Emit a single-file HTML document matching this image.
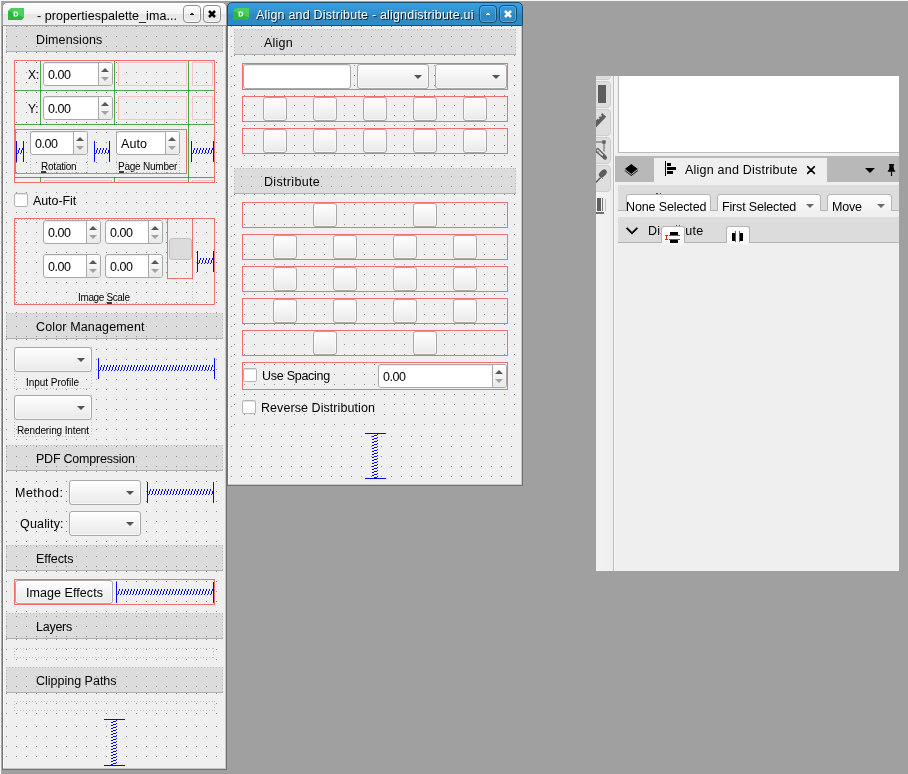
<!DOCTYPE html><html><head><meta charset="utf-8"><title>Qt Designer</title><style>
html,body{margin:0;padding:0}
body{width:908px;height:774px;position:relative;overflow:hidden;background:#a0a0a0;font-family:"Liberation Sans", sans-serif;}
div,svg{position:absolute;box-sizing:content-box}
.a{position:absolute}
.t{position:absolute;white-space:nowrap;font-family:"Liberation Sans", sans-serif;will-change:transform}

</style></head><body>
<div class="a" style="left:0px;top:0px;width:908px;height:1px;background:#f6f6f6"></div>
<div class="a" style="left:0px;top:0px;width:1px;height:774px;background:#f6f6f6"></div>
<div class="a" style="left:1px;top:1px;width:1px;height:773px;background:#aeaeae"></div>
<div class="a" style="left:2px;top:6px;width:225px;height:764px;background:#efefef"></div>
<div class="a" style="left:2px;top:6px;width:223px;height:763px;border:1px solid #727272;border-top:none"></div>
<div class="a" style="left:3px;top:6px;width:1px;height:763px;background:#ffffff"></div>
<div class="a" style="left:3px;top:768px;width:222px;height:1px;background:#c7c7c7"></div>
<div class="a" style="left:225px;top:6px;width:1px;height:763px;background:#c7c7c7"></div>
<div class="a" style="left:2px;top:2px;width:223px;height:22px;border:1px solid #9b9b9b;border-radius:5px 5px 0 0;background:linear-gradient(#ffffff 0%,#f4f4f4 50%,#e6e6e6 51%,#efefef 100%)"></div>
<div class="a" style="left:227px;top:6px;width:296px;height:480px;background:#efefef"></div>
<div class="a" style="left:227px;top:6px;width:294px;height:479px;border:1px solid #727272;border-top:none"></div>
<div class="a" style="left:228px;top:6px;width:1px;height:479px;background:#ffffff"></div>
<div class="a" style="left:228px;top:484px;width:293px;height:1px;background:#c7c7c7"></div>
<div class="a" style="left:521px;top:6px;width:1px;height:479px;background:#c7c7c7"></div>
<div class="a" style="left:227px;top:2px;width:294px;height:22px;border:1px solid #1b4e6e;border-radius:5px 5px 0 0;background:linear-gradient(#37a0e2 0%,#318fca 50%,#2e87be 51%,#308cc6 100%)"></div>
<svg class="a" style="left:8px;top:8px" width="16" height="12" viewBox="0 0 16 12"><path d="M3 0H16V9.5L13.5 12H0V3Z" fill="#41cd52"/><path d="M0 3L16 9.5L13.5 12H0Z" fill="#2cb640"/><path d="M16 0V9.5L3 0Z" fill="#52d463" opacity=".6"/><path d="M5.6 3.4H8.2Q10.2 3.4 10.2 6Q10.2 8.6 8.2 8.6H5.6Z M6.9 4.5V7.5H8Q8.9 7.5 8.9 6Q8.9 4.5 8 4.5Z" fill="#fff" fill-rule="evenodd"/></svg>
<div class="t" style="left:36.50px;top:9px;font-size:12.5px;line-height:14px;color:#000;letter-spacing:0.068px;">- propertiespalette_ima...</div>
<div class="a" style="left:183px;top:5px;width:16px;height:16px;border-radius:4px;border:1px solid #8e8e8e;box-shadow:inset 0 0 0 1px rgba(255,255,255,0.5)"></div>
<div class="a" style="left:203px;top:5px;width:16px;height:16px;border-radius:4px;border:1px solid #8e8e8e;box-shadow:inset 0 0 0 1px rgba(255,255,255,0.5)"></div>
<svg class="a" style="left:190px;top:13px" width="4" height="2"><path d="M0 2V1.2Q0 1 .4 .9L1.4 .2Q2 -.1 2.6 .2L3.6 .9Q4 1 4 1.2V2Z" fill="#000"/></svg>
<svg class="a" style="left:208px;top:10px" width="8" height="8"><path d="M1 1L7 7M7 1L1 7" stroke="#000" stroke-width="2.5" stroke-linecap="butt"/></svg>
<svg class="a" style="left:6px;top:26px" width="217" height="740" shape-rendering="crispEdges"><defs><pattern id="p1" x="0" y="0" width="10" height="10" patternUnits="userSpaceOnUse"><rect width="1" height="1" fill="#8c8c8c"/></pattern></defs><rect width="217" height="740" fill="url(#p1)"/></svg>
<div class="a" style="left:6px;top:52px;width:217px;height:261px;background:#efefef"></div>
<svg class="a" style="left:6px;top:52px" width="217" height="261" shape-rendering="crispEdges"><defs><pattern id="p2" x="0" y="0" width="10" height="10" patternUnits="userSpaceOnUse"><rect width="1" height="1" fill="#8c8c8c"/></pattern></defs><rect width="217" height="261" fill="url(#p2)"/></svg>
<div class="a" style="left:6px;top:339px;width:217px;height:106px;background:#efefef"></div>
<svg class="a" style="left:6px;top:339px" width="217" height="106" shape-rendering="crispEdges"><defs><pattern id="p3" x="0" y="0" width="10" height="10" patternUnits="userSpaceOnUse"><rect width="1" height="1" fill="#8c8c8c"/></pattern></defs><rect width="217" height="106" fill="url(#p3)"/></svg>
<div class="a" style="left:6px;top:471px;width:217px;height:74px;background:#efefef"></div>
<svg class="a" style="left:6px;top:471px" width="217" height="74" shape-rendering="crispEdges"><defs><pattern id="p4" x="0" y="0" width="10" height="10" patternUnits="userSpaceOnUse"><rect width="1" height="1" fill="#8c8c8c"/></pattern></defs><rect width="217" height="74" fill="url(#p4)"/></svg>
<div class="a" style="left:6px;top:571px;width:217px;height:42px;background:#efefef"></div>
<svg class="a" style="left:6px;top:571px" width="217" height="42" shape-rendering="crispEdges"><defs><pattern id="p5" x="0" y="0" width="10" height="10" patternUnits="userSpaceOnUse"><rect width="1" height="1" fill="#8c8c8c"/></pattern></defs><rect width="217" height="42" fill="url(#p5)"/></svg>
<div class="a" style="left:6px;top:639px;width:217px;height:28px;background:#efefef"></div>
<svg class="a" style="left:6px;top:639px" width="217" height="28" shape-rendering="crispEdges"><defs><pattern id="p6" x="0" y="0" width="10" height="10" patternUnits="userSpaceOnUse"><rect width="1" height="1" fill="#8c8c8c"/></pattern></defs><rect width="217" height="28" fill="url(#p6)"/></svg>
<div class="a" style="left:6px;top:693px;width:217px;height:26px;background:#efefef"></div>
<svg class="a" style="left:6px;top:693px" width="217" height="26" shape-rendering="crispEdges"><defs><pattern id="p7" x="0" y="0" width="10" height="10" patternUnits="userSpaceOnUse"><rect width="1" height="1" fill="#8c8c8c"/></pattern></defs><rect width="217" height="26" fill="url(#p7)"/></svg>
<div class="a" style="left:6px;top:26px;width:217px;height:25px;background:#dcdcdc"></div>
<svg class="a" style="left:6px;top:26px" width="217" height="25" shape-rendering="crispEdges"><defs><pattern id="p8" x="0" y="0" width="10" height="10" patternUnits="userSpaceOnUse"><rect width="1" height="1" fill="#8e8e8e"/></pattern></defs><rect width="217" height="25" fill="url(#p8)"/></svg>
<div class="a" style="left:6px;top:51px;width:217px;height:1px;background:#b0b0b0"></div>
<div class="a" style="left:6px;top:26px;width:217px;height:1px;background:repeating-linear-gradient(to right,#b9b9b9 0 1px,transparent 1px 3px);background-position:0px 0"></div>
<div class="a" style="left:6px;top:26px;width:1px;height:25px;background:repeating-linear-gradient(to bottom,#b9b9b9 0 1px,transparent 1px 3px);background-position:0 0px"></div>
<div class="a" style="left:222px;top:26px;width:1px;height:25px;background:repeating-linear-gradient(to bottom,#b9b9b9 0 1px,transparent 1px 3px);background-position:0 0px"></div>
<div class="t" style="left:36.10px;top:33px;font-size:12.5px;line-height:14px;color:#000;letter-spacing:0.116px;">Dimensions</div>
<div class="a" style="left:6px;top:313px;width:217px;height:25px;background:#dcdcdc"></div>
<svg class="a" style="left:6px;top:313px" width="217" height="25" shape-rendering="crispEdges"><defs><pattern id="p9" x="0" y="3" width="10" height="10" patternUnits="userSpaceOnUse"><rect width="1" height="1" fill="#8e8e8e"/></pattern></defs><rect width="217" height="25" fill="url(#p9)"/></svg>
<div class="a" style="left:6px;top:338px;width:217px;height:1px;background:#b0b0b0"></div>
<div class="a" style="left:6px;top:313px;width:217px;height:1px;background:repeating-linear-gradient(to right,#b9b9b9 0 1px,transparent 1px 3px);background-position:0px 0"></div>
<div class="a" style="left:6px;top:313px;width:1px;height:25px;background:repeating-linear-gradient(to bottom,#b9b9b9 0 1px,transparent 1px 3px);background-position:0 0px"></div>
<div class="a" style="left:222px;top:313px;width:1px;height:25px;background:repeating-linear-gradient(to bottom,#b9b9b9 0 1px,transparent 1px 3px);background-position:0 0px"></div>
<div class="t" style="left:36.10px;top:320px;font-size:12.5px;line-height:14px;color:#000;letter-spacing:0.145px;">Color Management</div>
<div class="a" style="left:6px;top:445px;width:217px;height:25px;background:#dcdcdc"></div>
<svg class="a" style="left:6px;top:445px" width="217" height="25" shape-rendering="crispEdges"><defs><pattern id="p10" x="0" y="1" width="10" height="10" patternUnits="userSpaceOnUse"><rect width="1" height="1" fill="#8e8e8e"/></pattern></defs><rect width="217" height="25" fill="url(#p10)"/></svg>
<div class="a" style="left:6px;top:470px;width:217px;height:1px;background:#b0b0b0"></div>
<div class="a" style="left:6px;top:445px;width:217px;height:1px;background:repeating-linear-gradient(to right,#b9b9b9 0 1px,transparent 1px 3px);background-position:0px 0"></div>
<div class="a" style="left:6px;top:445px;width:1px;height:25px;background:repeating-linear-gradient(to bottom,#b9b9b9 0 1px,transparent 1px 3px);background-position:0 0px"></div>
<div class="a" style="left:222px;top:445px;width:1px;height:25px;background:repeating-linear-gradient(to bottom,#b9b9b9 0 1px,transparent 1px 3px);background-position:0 0px"></div>
<div class="t" style="left:36.10px;top:452px;font-size:12.5px;line-height:14px;color:#000;letter-spacing:-0.226px;">PDF Compression</div>
<div class="a" style="left:6px;top:545px;width:217px;height:25px;background:#dcdcdc"></div>
<svg class="a" style="left:6px;top:545px" width="217" height="25" shape-rendering="crispEdges"><defs><pattern id="p11" x="0" y="1" width="10" height="10" patternUnits="userSpaceOnUse"><rect width="1" height="1" fill="#8e8e8e"/></pattern></defs><rect width="217" height="25" fill="url(#p11)"/></svg>
<div class="a" style="left:6px;top:570px;width:217px;height:1px;background:#b0b0b0"></div>
<div class="a" style="left:6px;top:545px;width:217px;height:1px;background:repeating-linear-gradient(to right,#b9b9b9 0 1px,transparent 1px 3px);background-position:0px 0"></div>
<div class="a" style="left:6px;top:545px;width:1px;height:25px;background:repeating-linear-gradient(to bottom,#b9b9b9 0 1px,transparent 1px 3px);background-position:0 0px"></div>
<div class="a" style="left:222px;top:545px;width:1px;height:25px;background:repeating-linear-gradient(to bottom,#b9b9b9 0 1px,transparent 1px 3px);background-position:0 0px"></div>
<div class="t" style="left:36.10px;top:552px;font-size:12.5px;line-height:14px;color:#000;letter-spacing:-0.089px;">Effects</div>
<div class="a" style="left:6px;top:613px;width:217px;height:25px;background:#dcdcdc"></div>
<svg class="a" style="left:6px;top:613px" width="217" height="25" shape-rendering="crispEdges"><defs><pattern id="p12" x="0" y="3" width="10" height="10" patternUnits="userSpaceOnUse"><rect width="1" height="1" fill="#8e8e8e"/></pattern></defs><rect width="217" height="25" fill="url(#p12)"/></svg>
<div class="a" style="left:6px;top:638px;width:217px;height:1px;background:#b0b0b0"></div>
<div class="a" style="left:6px;top:613px;width:217px;height:1px;background:repeating-linear-gradient(to right,#b9b9b9 0 1px,transparent 1px 3px);background-position:0px 0"></div>
<div class="a" style="left:6px;top:613px;width:1px;height:25px;background:repeating-linear-gradient(to bottom,#b9b9b9 0 1px,transparent 1px 3px);background-position:0 0px"></div>
<div class="a" style="left:222px;top:613px;width:1px;height:25px;background:repeating-linear-gradient(to bottom,#b9b9b9 0 1px,transparent 1px 3px);background-position:0 0px"></div>
<div class="t" style="left:36.10px;top:620px;font-size:12.5px;line-height:14px;color:#000;letter-spacing:-0.254px;">Layers</div>
<div class="a" style="left:6px;top:667px;width:217px;height:25px;background:#dcdcdc"></div>
<svg class="a" style="left:6px;top:667px" width="217" height="25" shape-rendering="crispEdges"><defs><pattern id="p13" x="0" y="9" width="10" height="10" patternUnits="userSpaceOnUse"><rect width="1" height="1" fill="#8e8e8e"/></pattern></defs><rect width="217" height="25" fill="url(#p13)"/></svg>
<div class="a" style="left:6px;top:692px;width:217px;height:1px;background:#b0b0b0"></div>
<div class="a" style="left:6px;top:667px;width:217px;height:1px;background:repeating-linear-gradient(to right,#b9b9b9 0 1px,transparent 1px 3px);background-position:0px 0"></div>
<div class="a" style="left:6px;top:667px;width:1px;height:25px;background:repeating-linear-gradient(to bottom,#b9b9b9 0 1px,transparent 1px 3px);background-position:0 0px"></div>
<div class="a" style="left:222px;top:667px;width:1px;height:25px;background:repeating-linear-gradient(to bottom,#b9b9b9 0 1px,transparent 1px 3px);background-position:0 0px"></div>
<div class="t" style="left:36.20px;top:674px;font-size:12.5px;line-height:14px;color:#000;letter-spacing:-0.004px;">Clipping Paths</div>
<div class="a" style="left:14px;top:60px;width:199px;height:121px;border:1px solid #f07070"></div>
<div class="a" style="left:40px;top:61px;width:1px;height:64px;background:#4ea64e"></div>
<div class="a" style="left:40px;top:177px;width:1px;height:5px;background:#4ea64e"></div>
<div class="a" style="left:114px;top:61px;width:1px;height:64px;background:#4ea64e"></div>
<div class="a" style="left:114px;top:177px;width:1px;height:5px;background:#4ea64e"></div>
<div class="a" style="left:188px;top:61px;width:1px;height:121px;background:#4ea64e"></div>
<div class="a" style="left:15px;top:90px;width:199px;height:1px;background:#4ea64e"></div>
<div class="a" style="left:40px;top:90px;width:1px;height:1px;background:#1f861f"></div>
<div class="a" style="left:114px;top:90px;width:1px;height:1px;background:#1f861f"></div>
<div class="a" style="left:188px;top:90px;width:1px;height:1px;background:#1f861f"></div>
<div class="a" style="left:15px;top:124px;width:199px;height:1px;background:#4ea64e"></div>
<div class="a" style="left:40px;top:124px;width:1px;height:1px;background:#1f861f"></div>
<div class="a" style="left:114px;top:124px;width:1px;height:1px;background:#1f861f"></div>
<div class="a" style="left:188px;top:124px;width:1px;height:1px;background:#1f861f"></div>
<div class="a" style="left:15px;top:177px;width:199px;height:1px;background:#4ea64e"></div>
<div class="a" style="left:40px;top:177px;width:1px;height:1px;background:#1f861f"></div>
<div class="a" style="left:114px;top:177px;width:1px;height:1px;background:#1f861f"></div>
<div class="a" style="left:188px;top:177px;width:1px;height:1px;background:#1f861f"></div>
<div class="a" style="left:118px;top:62px;width:67px;height:22px;border:1px solid #f6c4c4"></div>
<div class="a" style="left:192px;top:62px;width:19px;height:22px;border:1px solid #f6c4c4"></div>
<div class="a" style="left:118px;top:96px;width:67px;height:22px;border:1px solid #f6c4c4"></div>
<div class="a" style="left:192px;top:96px;width:19px;height:22px;border:1px solid #f6c4c4"></div>
<div class="a" style="left:44px;top:180px;width:68px;height:1px;background:#f6c4c4"></div>
<div class="a" style="left:44px;top:180px;width:1px;height:2px;background:#f6c4c4"></div>
<div class="a" style="left:111px;top:180px;width:1px;height:2px;background:#f6c4c4"></div>
<div class="a" style="left:118px;top:180px;width:69px;height:1px;background:#f6c4c4"></div>
<div class="a" style="left:118px;top:180px;width:1px;height:2px;background:#f6c4c4"></div>
<div class="a" style="left:186px;top:180px;width:1px;height:2px;background:#f6c4c4"></div>
<div class="a" style="left:192px;top:180px;width:21px;height:1px;background:#f6c4c4"></div>
<div class="a" style="left:192px;top:180px;width:1px;height:2px;background:#f6c4c4"></div>
<div class="a" style="left:212px;top:180px;width:1px;height:2px;background:#f6c4c4"></div>
<div class="t" style="left:27.70px;top:68px;font-size:12px;line-height:14px;color:#000;letter-spacing:0.000px;">X:</div>
<div class="t" style="left:28.36px;top:102px;font-size:12px;line-height:14px;color:#000;letter-spacing:0.000px;">Y:</div>
<div class="a" style="left:43px;top:62px;width:68px;height:22px;border:1px solid #a8a8a8;border-radius:3px;background:#fff;overflow:hidden;box-shadow:inset 0 1px 0 #ececec"><div class="a" style="left:54px;top:0;width:15px;height:22px;background:linear-gradient(#fefefe,#e9e9e9);border-left:1px solid #a9a9a9"></div></div>
<svg class="a" style="left:101.0px;top:68.0px" width="8" height="4"><path d="M0 4H8L4.0 0Z" fill="#585858"/></svg>
<svg class="a" style="left:101.0px;top:77.0px" width="8" height="4"><path d="M0 0H8L4.0 4Z" fill="#a2a2a2"/></svg>
<div class="t" style="left:48.30px;top:68px;font-size:12.5px;line-height:14px;color:#000;letter-spacing:-0.426px;">0.00</div>
<div class="a" style="left:43px;top:96px;width:68px;height:22px;border:1px solid #a8a8a8;border-radius:3px;background:#fff;overflow:hidden;box-shadow:inset 0 1px 0 #ececec"><div class="a" style="left:54px;top:0;width:15px;height:22px;background:linear-gradient(#fefefe,#e9e9e9);border-left:1px solid #a9a9a9"></div></div>
<svg class="a" style="left:101.0px;top:102.0px" width="8" height="4"><path d="M0 4H8L4.0 0Z" fill="#585858"/></svg>
<svg class="a" style="left:101.0px;top:111.0px" width="8" height="4"><path d="M0 0H8L4.0 4Z" fill="#a2a2a2"/></svg>
<div class="t" style="left:48.30px;top:102px;font-size:12.5px;line-height:14px;color:#000;letter-spacing:-0.426px;">0.00</div>
<div class="a" style="left:15px;top:129px;width:172px;height:45px;background:#efefef"></div>
<svg class="a" style="left:15px;top:129px" width="172" height="45" shape-rendering="crispEdges"><defs><pattern id="p14" x="1" y="3" width="10" height="10" patternUnits="userSpaceOnUse"><rect width="1" height="1" fill="#8c8c8c"/></pattern></defs><rect width="172" height="45" fill="url(#p14)"/></svg>
<div class="a" style="left:15px;top:129px;width:170px;height:43px;border:1px solid #f07070"></div>
<div class="a" style="left:30px;top:131px;width:58px;height:1px;background:repeating-linear-gradient(to right,#c0c0c0 0 1px,transparent 1px 3px);background-position:0px 0"></div>
<div class="a" style="left:30px;top:172px;width:58px;height:1px;background:repeating-linear-gradient(to right,#c0c0c0 0 1px,transparent 1px 3px);background-position:0px 0"></div>
<div class="a" style="left:30px;top:131px;width:1px;height:42px;background:repeating-linear-gradient(to bottom,#c0c0c0 0 1px,transparent 1px 3px);background-position:0 0px"></div>
<div class="a" style="left:87px;top:131px;width:1px;height:42px;background:repeating-linear-gradient(to bottom,#c0c0c0 0 1px,transparent 1px 3px);background-position:0 0px"></div>
<div class="a" style="left:116px;top:131px;width:64px;height:1px;background:repeating-linear-gradient(to right,#c0c0c0 0 1px,transparent 1px 3px);background-position:0px 0"></div>
<div class="a" style="left:116px;top:172px;width:64px;height:1px;background:repeating-linear-gradient(to right,#c0c0c0 0 1px,transparent 1px 3px);background-position:0px 0"></div>
<div class="a" style="left:116px;top:131px;width:1px;height:42px;background:repeating-linear-gradient(to bottom,#c0c0c0 0 1px,transparent 1px 3px);background-position:0 0px"></div>
<div class="a" style="left:179px;top:131px;width:1px;height:42px;background:repeating-linear-gradient(to bottom,#c0c0c0 0 1px,transparent 1px 3px);background-position:0 0px"></div>
<div class="a" style="left:30px;top:131px;width:56px;height:22px;border:1px solid #a8a8a8;border-radius:3px;background:#fff;overflow:hidden;box-shadow:inset 0 1px 0 #ececec"><div class="a" style="left:42px;top:0;width:15px;height:22px;background:linear-gradient(#fefefe,#e9e9e9);border-left:1px solid #a9a9a9"></div></div>
<svg class="a" style="left:76.0px;top:137.0px" width="8" height="4"><path d="M0 4H8L4.0 0Z" fill="#585858"/></svg>
<svg class="a" style="left:76.0px;top:146.0px" width="8" height="4"><path d="M0 0H8L4.0 4Z" fill="#a2a2a2"/></svg>
<div class="t" style="left:35.30px;top:137px;font-size:12.5px;line-height:14px;color:#000;letter-spacing:-0.426px;">0.00</div>
<div class="a" style="left:116px;top:131px;width:62px;height:22px;border:1px solid #a8a8a8;border-radius:3px;background:#fff;overflow:hidden;box-shadow:inset 0 1px 0 #ececec"><div class="a" style="left:48px;top:0;width:15px;height:22px;background:linear-gradient(#fefefe,#e9e9e9);border-left:1px solid #a9a9a9"></div></div>
<svg class="a" style="left:168.0px;top:137.0px" width="8" height="4"><path d="M0 4H8L4.0 0Z" fill="#585858"/></svg>
<svg class="a" style="left:168.0px;top:146.0px" width="8" height="4"><path d="M0 0H8L4.0 4Z" fill="#a2a2a2"/></svg>
<div class="t" style="left:121.30px;top:137px;font-size:12.5px;line-height:14px;color:#000;letter-spacing:0.046px;">Auto</div>
<div class="t" style="left:40.80px;top:161px;font-size:10px;line-height:11px;color:#000;letter-spacing:-0.226px;">Rotation</div>
<div class="t" style="left:118.40px;top:161px;font-size:10px;line-height:11px;color:#000;letter-spacing:-0.227px;">Page Number</div>
<div class="a" style="left:41px;top:171px;width:5px;height:2px;background:#3a3a3a"></div>
<div class="a" style="left:119px;top:171px;width:5px;height:2px;background:#3a3a3a"></div>
<svg class="a" style="left:16px;top:141px" width="8" height="21" shape-rendering="crispEdges"><path d="M0.5 7.5L1.5 13.5M3.5 7.5L4.5 13.5M6.5 7.5L7.5 13.5M9.5 7.5L10.5 13.5" stroke="#fff" stroke-width="1" fill="none"/><path d="M1.5 13.5L3.5 7.5M4.5 13.5L6.5 7.5M7.5 13.5L9.5 7.5M10.5 13.5L12.5 7.5" stroke="#0000ff" stroke-width="1" fill="none"/><rect x="0" y="0" width="1" height="21" fill="#0000ff"/><rect x="7" y="0" width="1" height="21" fill="#0000ff"/></svg>
<svg class="a" style="left:94px;top:141px" width="16" height="21" shape-rendering="crispEdges"><path d="M0.5 7.5L1.5 13.5M3.5 7.5L4.5 13.5M6.5 7.5L7.5 13.5M9.5 7.5L10.5 13.5M12.5 7.5L13.5 13.5M15.5 7.5L16.5 13.5M18.5 7.5L19.5 13.5" stroke="#fff" stroke-width="1" fill="none"/><path d="M1.5 13.5L3.5 7.5M4.5 13.5L6.5 7.5M7.5 13.5L9.5 7.5M10.5 13.5L12.5 7.5M13.5 13.5L15.5 7.5M16.5 13.5L18.5 7.5M19.5 13.5L21.5 7.5" stroke="#0000ff" stroke-width="1" fill="none"/><rect x="0" y="0" width="1" height="21" fill="#0000ff"/><rect x="15" y="0" width="1" height="21" fill="#0000ff"/></svg>
<svg class="a" style="left:191px;top:141px" width="23" height="21" shape-rendering="crispEdges"><path d="M0.5 7.5L1.5 13.5M3.5 7.5L4.5 13.5M6.5 7.5L7.5 13.5M9.5 7.5L10.5 13.5M12.5 7.5L13.5 13.5M15.5 7.5L16.5 13.5M18.5 7.5L19.5 13.5M21.5 7.5L22.5 13.5M24.5 7.5L25.5 13.5" stroke="#fff" stroke-width="1" fill="none"/><path d="M1.5 13.5L3.5 7.5M4.5 13.5L6.5 7.5M7.5 13.5L9.5 7.5M10.5 13.5L12.5 7.5M13.5 13.5L15.5 7.5M16.5 13.5L18.5 7.5M19.5 13.5L21.5 7.5M22.5 13.5L24.5 7.5M25.5 13.5L27.5 7.5" stroke="#0000ff" stroke-width="1" fill="none"/><rect x="0" y="0" width="1" height="21" fill="#0000ff"/><rect x="22" y="0" width="1" height="21" fill="#0000ff"/></svg>
<div class="a" style="left:14px;top:193px;width:12px;height:12px;border:1px solid #b4b4b4;border-radius:2px;background:#fff;box-shadow:inset 0 1px 0 #e4e4e4"></div>
<div class="t" style="left:33.10px;top:194px;font-size:12.5px;line-height:14px;color:#000;letter-spacing:-0.084px;">Auto-Fit</div>
<div class="a" style="left:14px;top:218px;width:199px;height:85px;border:1px solid #f07070"></div>
<div class="a" style="left:15px;top:219px;width:178px;height:1px;background:repeating-linear-gradient(to right,#c0c0c0 0 1px,transparent 1px 3px);background-position:0px 0"></div>
<div class="a" style="left:15px;top:303px;width:178px;height:1px;background:repeating-linear-gradient(to right,#c0c0c0 0 1px,transparent 1px 3px);background-position:0px 0"></div>
<div class="a" style="left:15px;top:219px;width:1px;height:85px;background:repeating-linear-gradient(to bottom,#c0c0c0 0 1px,transparent 1px 3px);background-position:0 0px"></div>
<div class="a" style="left:192px;top:219px;width:1px;height:85px;background:repeating-linear-gradient(to bottom,#c0c0c0 0 1px,transparent 1px 3px);background-position:0 0px"></div>
<div class="a" style="left:43px;top:220px;width:56px;height:22px;border:1px solid #a8a8a8;border-radius:3px;background:#fff;overflow:hidden;box-shadow:inset 0 1px 0 #ececec"><div class="a" style="left:42px;top:0;width:15px;height:22px;background:linear-gradient(#fefefe,#e9e9e9);border-left:1px solid #a9a9a9"></div></div>
<svg class="a" style="left:89.0px;top:226.0px" width="8" height="4"><path d="M0 4H8L4.0 0Z" fill="#585858"/></svg>
<svg class="a" style="left:89.0px;top:235.0px" width="8" height="4"><path d="M0 0H8L4.0 4Z" fill="#a2a2a2"/></svg>
<div class="t" style="left:48.30px;top:226px;font-size:12.5px;line-height:14px;color:#000;letter-spacing:-0.426px;">0.00</div>
<div class="a" style="left:105px;top:220px;width:56px;height:22px;border:1px solid #a8a8a8;border-radius:3px;background:#fff;overflow:hidden;box-shadow:inset 0 1px 0 #ececec"><div class="a" style="left:42px;top:0;width:15px;height:22px;background:linear-gradient(#fefefe,#e9e9e9);border-left:1px solid #a9a9a9"></div></div>
<svg class="a" style="left:151.0px;top:226.0px" width="8" height="4"><path d="M0 4H8L4.0 0Z" fill="#585858"/></svg>
<svg class="a" style="left:151.0px;top:235.0px" width="8" height="4"><path d="M0 0H8L4.0 4Z" fill="#a2a2a2"/></svg>
<div class="t" style="left:110.30px;top:226px;font-size:12.5px;line-height:14px;color:#000;letter-spacing:-0.426px;">0.00</div>
<div class="a" style="left:43px;top:254px;width:56px;height:22px;border:1px solid #a8a8a8;border-radius:3px;background:#fff;overflow:hidden;box-shadow:inset 0 1px 0 #ececec"><div class="a" style="left:42px;top:0;width:15px;height:22px;background:linear-gradient(#fefefe,#e9e9e9);border-left:1px solid #a9a9a9"></div></div>
<svg class="a" style="left:89.0px;top:260.0px" width="8" height="4"><path d="M0 4H8L4.0 0Z" fill="#585858"/></svg>
<svg class="a" style="left:89.0px;top:269.0px" width="8" height="4"><path d="M0 0H8L4.0 4Z" fill="#a2a2a2"/></svg>
<div class="t" style="left:48.30px;top:260px;font-size:12.5px;line-height:14px;color:#000;letter-spacing:-0.426px;">0.00</div>
<div class="a" style="left:105px;top:254px;width:56px;height:22px;border:1px solid #a8a8a8;border-radius:3px;background:#fff;overflow:hidden;box-shadow:inset 0 1px 0 #ececec"><div class="a" style="left:42px;top:0;width:15px;height:22px;background:linear-gradient(#fefefe,#e9e9e9);border-left:1px solid #a9a9a9"></div></div>
<svg class="a" style="left:151.0px;top:260.0px" width="8" height="4"><path d="M0 4H8L4.0 0Z" fill="#585858"/></svg>
<svg class="a" style="left:151.0px;top:269.0px" width="8" height="4"><path d="M0 0H8L4.0 4Z" fill="#a2a2a2"/></svg>
<div class="t" style="left:110.30px;top:260px;font-size:12.5px;line-height:14px;color:#000;letter-spacing:-0.426px;">0.00</div>
<div class="a" style="left:167px;top:218px;width:24px;height:59px;border:1px solid #f07070"></div>
<div class="a" style="left:169px;top:238px;width:21px;height:20px;border:1px solid #c2c2c2;border-radius:3px;background:#dcdcdc"></div>
<svg class="a" style="left:197px;top:251px" width="17" height="21" shape-rendering="crispEdges"><path d="M0.5 7.5L1.5 13.5M3.5 7.5L4.5 13.5M6.5 7.5L7.5 13.5M9.5 7.5L10.5 13.5M12.5 7.5L13.5 13.5M15.5 7.5L16.5 13.5M18.5 7.5L19.5 13.5" stroke="#fff" stroke-width="1" fill="none"/><path d="M1.5 13.5L3.5 7.5M4.5 13.5L6.5 7.5M7.5 13.5L9.5 7.5M10.5 13.5L12.5 7.5M13.5 13.5L15.5 7.5M16.5 13.5L18.5 7.5M19.5 13.5L21.5 7.5" stroke="#0000ff" stroke-width="1" fill="none"/><rect x="0" y="0" width="1" height="21" fill="#0000ff"/><rect x="16" y="0" width="1" height="21" fill="#0000ff"/></svg>
<div class="t" style="left:77.80px;top:292px;font-size:10px;line-height:11px;color:#000;letter-spacing:-0.362px;">Image Scale</div>
<div class="a" style="left:107px;top:302px;width:5px;height:1.6px;background:#3a3a3a"></div>
<div class="a" style="left:14px;top:347px;width:78px;height:1px;background:repeating-linear-gradient(to right,#c0c0c0 0 1px,transparent 1px 3px);background-position:0px 0"></div>
<div class="a" style="left:14px;top:388px;width:78px;height:1px;background:repeating-linear-gradient(to right,#c0c0c0 0 1px,transparent 1px 3px);background-position:0px 0"></div>
<div class="a" style="left:14px;top:347px;width:1px;height:42px;background:repeating-linear-gradient(to bottom,#c0c0c0 0 1px,transparent 1px 3px);background-position:0 0px"></div>
<div class="a" style="left:91px;top:347px;width:1px;height:42px;background:repeating-linear-gradient(to bottom,#c0c0c0 0 1px,transparent 1px 3px);background-position:0 0px"></div>
<div class="a" style="left:14px;top:395px;width:78px;height:1px;background:repeating-linear-gradient(to right,#c0c0c0 0 1px,transparent 1px 3px);background-position:0px 0"></div>
<div class="a" style="left:14px;top:436px;width:78px;height:1px;background:repeating-linear-gradient(to right,#c0c0c0 0 1px,transparent 1px 3px);background-position:0px 0"></div>
<div class="a" style="left:14px;top:395px;width:1px;height:42px;background:repeating-linear-gradient(to bottom,#c0c0c0 0 1px,transparent 1px 3px);background-position:0 0px"></div>
<div class="a" style="left:91px;top:395px;width:1px;height:42px;background:repeating-linear-gradient(to bottom,#c0c0c0 0 1px,transparent 1px 3px);background-position:0 0px"></div>
<div class="a" style="left:14px;top:347px;width:76px;height:23px;border:1px solid #a8a8a8;border-radius:3px;background:linear-gradient(#fefefe,#e9e9e9);box-shadow:inset 0 0 0 1px rgba(255,255,255,.6)"></div>
<svg class="a" style="left:76.5px;top:357.5px" width="8" height="4"><path d="M0 0H8L4.0 4Z" fill="#525252"/></svg>
<div class="a" style="left:14px;top:395px;width:76px;height:23px;border:1px solid #a8a8a8;border-radius:3px;background:linear-gradient(#fefefe,#e9e9e9);box-shadow:inset 0 0 0 1px rgba(255,255,255,.6)"></div>
<svg class="a" style="left:76.5px;top:405.5px" width="8" height="4"><path d="M0 0H8L4.0 4Z" fill="#525252"/></svg>
<div class="t" style="left:26.00px;top:377px;font-size:10px;line-height:11px;color:#000;letter-spacing:-0.025px;">Input Profile</div>
<div class="t" style="left:16.90px;top:425px;font-size:10px;line-height:11px;color:#000;letter-spacing:-0.124px;">Rendering Intent</div>
<svg class="a" style="left:98px;top:358px" width="117" height="21" shape-rendering="crispEdges"><path d="M0.5 7.5L1.5 13.5M3.5 7.5L4.5 13.5M6.5 7.5L7.5 13.5M9.5 7.5L10.5 13.5M12.5 7.5L13.5 13.5M15.5 7.5L16.5 13.5M18.5 7.5L19.5 13.5M21.5 7.5L22.5 13.5M24.5 7.5L25.5 13.5M27.5 7.5L28.5 13.5M30.5 7.5L31.5 13.5M33.5 7.5L34.5 13.5M36.5 7.5L37.5 13.5M39.5 7.5L40.5 13.5M42.5 7.5L43.5 13.5M45.5 7.5L46.5 13.5M48.5 7.5L49.5 13.5M51.5 7.5L52.5 13.5M54.5 7.5L55.5 13.5M57.5 7.5L58.5 13.5M60.5 7.5L61.5 13.5M63.5 7.5L64.5 13.5M66.5 7.5L67.5 13.5M69.5 7.5L70.5 13.5M72.5 7.5L73.5 13.5M75.5 7.5L76.5 13.5M78.5 7.5L79.5 13.5M81.5 7.5L82.5 13.5M84.5 7.5L85.5 13.5M87.5 7.5L88.5 13.5M90.5 7.5L91.5 13.5M93.5 7.5L94.5 13.5M96.5 7.5L97.5 13.5M99.5 7.5L100.5 13.5M102.5 7.5L103.5 13.5M105.5 7.5L106.5 13.5M108.5 7.5L109.5 13.5M111.5 7.5L112.5 13.5M114.5 7.5L115.5 13.5M117.5 7.5L118.5 13.5M120.5 7.5L121.5 13.5" stroke="#fff" stroke-width="1" fill="none"/><path d="M1.5 13.5L3.5 7.5M4.5 13.5L6.5 7.5M7.5 13.5L9.5 7.5M10.5 13.5L12.5 7.5M13.5 13.5L15.5 7.5M16.5 13.5L18.5 7.5M19.5 13.5L21.5 7.5M22.5 13.5L24.5 7.5M25.5 13.5L27.5 7.5M28.5 13.5L30.5 7.5M31.5 13.5L33.5 7.5M34.5 13.5L36.5 7.5M37.5 13.5L39.5 7.5M40.5 13.5L42.5 7.5M43.5 13.5L45.5 7.5M46.5 13.5L48.5 7.5M49.5 13.5L51.5 7.5M52.5 13.5L54.5 7.5M55.5 13.5L57.5 7.5M58.5 13.5L60.5 7.5M61.5 13.5L63.5 7.5M64.5 13.5L66.5 7.5M67.5 13.5L69.5 7.5M70.5 13.5L72.5 7.5M73.5 13.5L75.5 7.5M76.5 13.5L78.5 7.5M79.5 13.5L81.5 7.5M82.5 13.5L84.5 7.5M85.5 13.5L87.5 7.5M88.5 13.5L90.5 7.5M91.5 13.5L93.5 7.5M94.5 13.5L96.5 7.5M97.5 13.5L99.5 7.5M100.5 13.5L102.5 7.5M103.5 13.5L105.5 7.5M106.5 13.5L108.5 7.5M109.5 13.5L111.5 7.5M112.5 13.5L114.5 7.5M115.5 13.5L117.5 7.5M118.5 13.5L120.5 7.5M121.5 13.5L123.5 7.5" stroke="#0000ff" stroke-width="1" fill="none"/><rect x="0" y="0" width="1" height="21" fill="#0000ff"/><rect x="116" y="0" width="1" height="21" fill="#0000ff"/></svg>
<div class="t" style="left:15.20px;top:486px;font-size:12.5px;line-height:14px;color:#000;letter-spacing:0.468px;">Method:</div>
<div class="t" style="left:19.60px;top:517px;font-size:12.5px;line-height:14px;color:#000;letter-spacing:0.171px;">Quality:</div>
<div class="a" style="left:69px;top:480px;width:70px;height:23px;border:1px solid #a8a8a8;border-radius:3px;background:linear-gradient(#fefefe,#e9e9e9);box-shadow:inset 0 0 0 1px rgba(255,255,255,.6)"></div>
<svg class="a" style="left:125.5px;top:490.5px" width="8" height="4"><path d="M0 0H8L4.0 4Z" fill="#525252"/></svg>
<div class="a" style="left:69px;top:511px;width:70px;height:23px;border:1px solid #a8a8a8;border-radius:3px;background:linear-gradient(#fefefe,#e9e9e9);box-shadow:inset 0 0 0 1px rgba(255,255,255,.6)"></div>
<svg class="a" style="left:125.5px;top:521.5px" width="8" height="4"><path d="M0 0H8L4.0 4Z" fill="#525252"/></svg>
<svg class="a" style="left:147px;top:482px" width="67" height="21" shape-rendering="crispEdges"><path d="M0.5 7.5L1.5 13.5M3.5 7.5L4.5 13.5M6.5 7.5L7.5 13.5M9.5 7.5L10.5 13.5M12.5 7.5L13.5 13.5M15.5 7.5L16.5 13.5M18.5 7.5L19.5 13.5M21.5 7.5L22.5 13.5M24.5 7.5L25.5 13.5M27.5 7.5L28.5 13.5M30.5 7.5L31.5 13.5M33.5 7.5L34.5 13.5M36.5 7.5L37.5 13.5M39.5 7.5L40.5 13.5M42.5 7.5L43.5 13.5M45.5 7.5L46.5 13.5M48.5 7.5L49.5 13.5M51.5 7.5L52.5 13.5M54.5 7.5L55.5 13.5M57.5 7.5L58.5 13.5M60.5 7.5L61.5 13.5M63.5 7.5L64.5 13.5M66.5 7.5L67.5 13.5M69.5 7.5L70.5 13.5" stroke="#fff" stroke-width="1" fill="none"/><path d="M1.5 13.5L3.5 7.5M4.5 13.5L6.5 7.5M7.5 13.5L9.5 7.5M10.5 13.5L12.5 7.5M13.5 13.5L15.5 7.5M16.5 13.5L18.5 7.5M19.5 13.5L21.5 7.5M22.5 13.5L24.5 7.5M25.5 13.5L27.5 7.5M28.5 13.5L30.5 7.5M31.5 13.5L33.5 7.5M34.5 13.5L36.5 7.5M37.5 13.5L39.5 7.5M40.5 13.5L42.5 7.5M43.5 13.5L45.5 7.5M46.5 13.5L48.5 7.5M49.5 13.5L51.5 7.5M52.5 13.5L54.5 7.5M55.5 13.5L57.5 7.5M58.5 13.5L60.5 7.5M61.5 13.5L63.5 7.5M64.5 13.5L66.5 7.5M67.5 13.5L69.5 7.5M70.5 13.5L72.5 7.5" stroke="#0000ff" stroke-width="1" fill="none"/><rect x="0" y="0" width="1" height="21" fill="#0000ff"/><rect x="66" y="0" width="1" height="21" fill="#0000ff"/></svg>
<div class="a" style="left:14px;top:579px;width:199px;height:24px;border:1px solid #f07070"></div>
<div class="a" style="left:15px;top:580px;width:96px;height:22px;border:1px solid #a8a8a8;border-radius:3px;background:linear-gradient(#fefefe,#e9e9e9);box-shadow:inset 0 0 0 1px rgba(255,255,255,.6)"></div>
<div class="t" style="left:25.50px;top:586px;font-size:12.5px;line-height:14px;color:#000;letter-spacing:0.063px;">Image Effects</div>
<svg class="a" style="left:116px;top:582px" width="98" height="21" shape-rendering="crispEdges"><path d="M0.5 7.5L1.5 13.5M3.5 7.5L4.5 13.5M6.5 7.5L7.5 13.5M9.5 7.5L10.5 13.5M12.5 7.5L13.5 13.5M15.5 7.5L16.5 13.5M18.5 7.5L19.5 13.5M21.5 7.5L22.5 13.5M24.5 7.5L25.5 13.5M27.5 7.5L28.5 13.5M30.5 7.5L31.5 13.5M33.5 7.5L34.5 13.5M36.5 7.5L37.5 13.5M39.5 7.5L40.5 13.5M42.5 7.5L43.5 13.5M45.5 7.5L46.5 13.5M48.5 7.5L49.5 13.5M51.5 7.5L52.5 13.5M54.5 7.5L55.5 13.5M57.5 7.5L58.5 13.5M60.5 7.5L61.5 13.5M63.5 7.5L64.5 13.5M66.5 7.5L67.5 13.5M69.5 7.5L70.5 13.5M72.5 7.5L73.5 13.5M75.5 7.5L76.5 13.5M78.5 7.5L79.5 13.5M81.5 7.5L82.5 13.5M84.5 7.5L85.5 13.5M87.5 7.5L88.5 13.5M90.5 7.5L91.5 13.5M93.5 7.5L94.5 13.5M96.5 7.5L97.5 13.5M99.5 7.5L100.5 13.5" stroke="#fff" stroke-width="1" fill="none"/><path d="M1.5 13.5L3.5 7.5M4.5 13.5L6.5 7.5M7.5 13.5L9.5 7.5M10.5 13.5L12.5 7.5M13.5 13.5L15.5 7.5M16.5 13.5L18.5 7.5M19.5 13.5L21.5 7.5M22.5 13.5L24.5 7.5M25.5 13.5L27.5 7.5M28.5 13.5L30.5 7.5M31.5 13.5L33.5 7.5M34.5 13.5L36.5 7.5M37.5 13.5L39.5 7.5M40.5 13.5L42.5 7.5M43.5 13.5L45.5 7.5M46.5 13.5L48.5 7.5M49.5 13.5L51.5 7.5M52.5 13.5L54.5 7.5M55.5 13.5L57.5 7.5M58.5 13.5L60.5 7.5M61.5 13.5L63.5 7.5M64.5 13.5L66.5 7.5M67.5 13.5L69.5 7.5M70.5 13.5L72.5 7.5M73.5 13.5L75.5 7.5M76.5 13.5L78.5 7.5M79.5 13.5L81.5 7.5M82.5 13.5L84.5 7.5M85.5 13.5L87.5 7.5M88.5 13.5L90.5 7.5M91.5 13.5L93.5 7.5M94.5 13.5L96.5 7.5M97.5 13.5L99.5 7.5M100.5 13.5L102.5 7.5" stroke="#0000ff" stroke-width="1" fill="none"/><rect x="0" y="0" width="1" height="21" fill="#0000ff"/><rect x="97" y="0" width="1" height="21" fill="#0000ff"/></svg>
<div class="a" style="left:14px;top:648px;width:200px;height:1px;background:repeating-linear-gradient(to right,#c0c0c0 0 1px,transparent 1px 3px);background-position:0px 0"></div>
<div class="a" style="left:14px;top:657px;width:200px;height:1px;background:repeating-linear-gradient(to right,#c0c0c0 0 1px,transparent 1px 3px);background-position:0px 0"></div>
<div class="a" style="left:14px;top:648px;width:1px;height:10px;background:repeating-linear-gradient(to bottom,#c0c0c0 0 1px,transparent 1px 3px);background-position:0 0px"></div>
<div class="a" style="left:213px;top:648px;width:1px;height:10px;background:repeating-linear-gradient(to bottom,#c0c0c0 0 1px,transparent 1px 3px);background-position:0 0px"></div>
<div class="a" style="left:14px;top:701px;width:201px;height:1px;background:repeating-linear-gradient(to right,#c0c0c0 0 1px,transparent 1px 3px);background-position:0px 0"></div>
<div class="a" style="left:14px;top:710px;width:201px;height:1px;background:repeating-linear-gradient(to right,#c0c0c0 0 1px,transparent 1px 3px);background-position:0px 0"></div>
<div class="a" style="left:14px;top:701px;width:1px;height:10px;background:repeating-linear-gradient(to bottom,#c0c0c0 0 1px,transparent 1px 3px);background-position:0 0px"></div>
<div class="a" style="left:214px;top:701px;width:1px;height:10px;background:repeating-linear-gradient(to bottom,#c0c0c0 0 1px,transparent 1px 3px);background-position:0 0px"></div>
<svg class="a" style="left:104px;top:719px" width="21" height="47" shape-rendering="crispEdges"><path d="M7.5 0.5L13.5 1.5M7.5 3.5L13.5 4.5M7.5 6.5L13.5 7.5M7.5 9.5L13.5 10.5M7.5 12.5L13.5 13.5M7.5 15.5L13.5 16.5M7.5 18.5L13.5 19.5M7.5 21.5L13.5 22.5M7.5 24.5L13.5 25.5M7.5 27.5L13.5 28.5M7.5 30.5L13.5 31.5M7.5 33.5L13.5 34.5M7.5 36.5L13.5 37.5M7.5 39.5L13.5 40.5M7.5 42.5L13.5 43.5M7.5 45.5L13.5 46.5M7.5 48.5L13.5 49.5" stroke="#fff" stroke-width="1" fill="none"/><path d="M13.5 1.5L7.5 3.5M13.5 4.5L7.5 6.5M13.5 7.5L7.5 9.5M13.5 10.5L7.5 12.5M13.5 13.5L7.5 15.5M13.5 16.5L7.5 18.5M13.5 19.5L7.5 21.5M13.5 22.5L7.5 24.5M13.5 25.5L7.5 27.5M13.5 28.5L7.5 30.5M13.5 31.5L7.5 33.5M13.5 34.5L7.5 36.5M13.5 37.5L7.5 39.5M13.5 40.5L7.5 42.5M13.5 43.5L7.5 45.5M13.5 46.5L7.5 48.5M13.5 49.5L7.5 51.5" stroke="#0000ff" stroke-width="1" fill="none"/><rect x="0" y="0" width="21" height="1" fill="#0000ff"/><rect x="0" y="46" width="21" height="1" fill="#0000ff"/></svg>
<svg class="a" style="left:233px;top:8px" width="16" height="12" viewBox="0 0 16 12"><path d="M3 0H16V9.5L13.5 12H0V3Z" fill="#41cd52"/><path d="M0 3L16 9.5L13.5 12H0Z" fill="#2cb640"/><path d="M16 0V9.5L3 0Z" fill="#52d463" opacity=".6"/><path d="M5.6 3.4H8.2Q10.2 3.4 10.2 6Q10.2 8.6 8.2 8.6H5.6Z M6.9 4.5V7.5H8Q8.9 7.5 8.9 6Q8.9 4.5 8 4.5Z" fill="#fff" fill-rule="evenodd"/></svg>
<div class="t" style="left:257.10px;top:9px;font-size:12.5px;line-height:14px;color:#0c1a26;letter-spacing:0.191px;">Align and Distribute - aligndistribute.ui</div>
<div class="t" style="left:256.10px;top:8px;font-size:12.5px;line-height:14px;color:#fff;letter-spacing:0.191px;">Align and Distribute - aligndistribute.ui</div>
<div class="a" style="left:479px;top:5px;width:16px;height:16px;border-radius:4px;border:1px solid #1b4e6e;box-shadow:inset 0 0 0 1px rgba(120,200,255,0.45)"></div>
<div class="a" style="left:499px;top:5px;width:16px;height:16px;border-radius:4px;border:1px solid #1b4e6e;box-shadow:inset 0 0 0 1px rgba(120,200,255,0.45)"></div>
<svg class="a" style="left:486px;top:13px" width="4" height="2"><path d="M0 2V1.2Q0 1 .4 .9L1.4 .2Q2 -.1 2.6 .2L3.6 .9Q4 1 4 1.2V2Z" fill="#fff"/></svg>
<svg class="a" style="left:504px;top:10px" width="8" height="8"><path d="M1 1L7 7M7 1L1 7" stroke="#fff" stroke-width="2.5" stroke-linecap="butt"/></svg>
<svg class="a" style="left:231px;top:26px" width="288" height="456" shape-rendering="crispEdges"><defs><pattern id="p15" x="0" y="0" width="10" height="10" patternUnits="userSpaceOnUse"><rect width="1" height="1" fill="#8c8c8c"/></pattern></defs><rect width="288" height="456" fill="url(#p15)"/></svg>
<div class="a" style="left:234px;top:55px;width:282px;height:106px;background:#efefef"></div>
<svg class="a" style="left:234px;top:55px" width="282" height="106" shape-rendering="crispEdges"><defs><pattern id="p16" x="0" y="0" width="10" height="10" patternUnits="userSpaceOnUse"><rect width="1" height="1" fill="#8c8c8c"/></pattern></defs><rect width="282" height="106" fill="url(#p16)"/></svg>
<div class="a" style="left:234px;top:194px;width:282px;height:237px;background:#efefef"></div>
<svg class="a" style="left:234px;top:194px" width="282" height="237" shape-rendering="crispEdges"><defs><pattern id="p17" x="0" y="0" width="10" height="10" patternUnits="userSpaceOnUse"><rect width="1" height="1" fill="#8c8c8c"/></pattern></defs><rect width="282" height="237" fill="url(#p17)"/></svg>
<div class="a" style="left:234px;top:29px;width:282px;height:25px;background:#dcdcdc"></div>
<svg class="a" style="left:234px;top:29px" width="282" height="25" shape-rendering="crispEdges"><defs><pattern id="p18" x="7" y="7" width="10" height="10" patternUnits="userSpaceOnUse"><rect width="1" height="1" fill="#8e8e8e"/></pattern></defs><rect width="282" height="25" fill="url(#p18)"/></svg>
<div class="a" style="left:234px;top:54px;width:282px;height:1px;background:#b0b0b0"></div>
<div class="a" style="left:234px;top:29px;width:282px;height:1px;background:repeating-linear-gradient(to right,#b9b9b9 0 1px,transparent 1px 3px);background-position:0px 0"></div>
<div class="a" style="left:234px;top:29px;width:1px;height:25px;background:repeating-linear-gradient(to bottom,#b9b9b9 0 1px,transparent 1px 3px);background-position:0 0px"></div>
<div class="a" style="left:515px;top:29px;width:1px;height:25px;background:repeating-linear-gradient(to bottom,#b9b9b9 0 1px,transparent 1px 3px);background-position:0 0px"></div>
<div class="t" style="left:263.70px;top:36px;font-size:12.5px;line-height:14px;color:#000;letter-spacing:0.214px;">Align</div>
<div class="a" style="left:234px;top:168px;width:282px;height:25px;background:#dcdcdc"></div>
<svg class="a" style="left:234px;top:168px" width="282" height="25" shape-rendering="crispEdges"><defs><pattern id="p19" x="7" y="8" width="10" height="10" patternUnits="userSpaceOnUse"><rect width="1" height="1" fill="#8e8e8e"/></pattern></defs><rect width="282" height="25" fill="url(#p19)"/></svg>
<div class="a" style="left:234px;top:193px;width:282px;height:1px;background:#b0b0b0"></div>
<div class="a" style="left:234px;top:168px;width:282px;height:1px;background:repeating-linear-gradient(to right,#b9b9b9 0 1px,transparent 1px 3px);background-position:0px 0"></div>
<div class="a" style="left:234px;top:168px;width:1px;height:25px;background:repeating-linear-gradient(to bottom,#b9b9b9 0 1px,transparent 1px 3px);background-position:0 0px"></div>
<div class="a" style="left:515px;top:168px;width:1px;height:25px;background:repeating-linear-gradient(to bottom,#b9b9b9 0 1px,transparent 1px 3px);background-position:0 0px"></div>
<div class="t" style="left:263.90px;top:175px;font-size:12.5px;line-height:14px;color:#000;letter-spacing:0.328px;">Distribute</div>
<div class="a" style="left:242px;top:63px;width:264px;height:25px;border:1px solid #f07070"></div>
<div class="a" style="left:243px;top:64px;width:106px;height:23px;border:1px solid #a8a8a8;border-radius:3px;background:#fff;box-shadow:inset 0 1px 0 #ececec"></div>
<div class="a" style="left:357px;top:64px;width:70px;height:23px;border:1px solid #a8a8a8;border-radius:3px;background:linear-gradient(#fefefe,#e9e9e9);box-shadow:inset 0 0 0 1px rgba(255,255,255,.6)"></div>
<svg class="a" style="left:413.5px;top:74.5px" width="8" height="4"><path d="M0 0H8L4.0 4Z" fill="#525252"/></svg>
<div class="a" style="left:435px;top:64px;width:70px;height:23px;border:1px solid #a8a8a8;border-radius:3px;background:linear-gradient(#fefefe,#e9e9e9);box-shadow:inset 0 0 0 1px rgba(255,255,255,.6)"></div>
<svg class="a" style="left:491.5px;top:74.5px" width="8" height="4"><path d="M0 0H8L4.0 4Z" fill="#525252"/></svg>
<div class="a" style="left:242px;top:96px;width:264px;height:24px;border:1px solid #f07070"></div>
<div class="a" style="left:263px;top:97px;width:22px;height:22px;border:1px solid #a8a8a8;border-radius:3px;background:linear-gradient(#fefefe,#e9e9e9);box-shadow:inset 0 0 0 1px rgba(255,255,255,.6)"></div>
<div class="a" style="left:313px;top:97px;width:22px;height:22px;border:1px solid #a8a8a8;border-radius:3px;background:linear-gradient(#fefefe,#e9e9e9);box-shadow:inset 0 0 0 1px rgba(255,255,255,.6)"></div>
<div class="a" style="left:363px;top:97px;width:22px;height:22px;border:1px solid #a8a8a8;border-radius:3px;background:linear-gradient(#fefefe,#e9e9e9);box-shadow:inset 0 0 0 1px rgba(255,255,255,.6)"></div>
<div class="a" style="left:413px;top:97px;width:22px;height:22px;border:1px solid #a8a8a8;border-radius:3px;background:linear-gradient(#fefefe,#e9e9e9);box-shadow:inset 0 0 0 1px rgba(255,255,255,.6)"></div>
<div class="a" style="left:463px;top:97px;width:22px;height:22px;border:1px solid #a8a8a8;border-radius:3px;background:linear-gradient(#fefefe,#e9e9e9);box-shadow:inset 0 0 0 1px rgba(255,255,255,.6)"></div>
<div class="a" style="left:242px;top:128px;width:264px;height:24px;border:1px solid #f07070"></div>
<div class="a" style="left:263px;top:129px;width:22px;height:22px;border:1px solid #a8a8a8;border-radius:3px;background:linear-gradient(#fefefe,#e9e9e9);box-shadow:inset 0 0 0 1px rgba(255,255,255,.6)"></div>
<div class="a" style="left:313px;top:129px;width:22px;height:22px;border:1px solid #a8a8a8;border-radius:3px;background:linear-gradient(#fefefe,#e9e9e9);box-shadow:inset 0 0 0 1px rgba(255,255,255,.6)"></div>
<div class="a" style="left:363px;top:129px;width:22px;height:22px;border:1px solid #a8a8a8;border-radius:3px;background:linear-gradient(#fefefe,#e9e9e9);box-shadow:inset 0 0 0 1px rgba(255,255,255,.6)"></div>
<div class="a" style="left:413px;top:129px;width:22px;height:22px;border:1px solid #a8a8a8;border-radius:3px;background:linear-gradient(#fefefe,#e9e9e9);box-shadow:inset 0 0 0 1px rgba(255,255,255,.6)"></div>
<div class="a" style="left:463px;top:129px;width:22px;height:22px;border:1px solid #a8a8a8;border-radius:3px;background:linear-gradient(#fefefe,#e9e9e9);box-shadow:inset 0 0 0 1px rgba(255,255,255,.6)"></div>
<div class="a" style="left:242px;top:202px;width:264px;height:24px;border:1px solid #f07070"></div>
<div class="a" style="left:313px;top:203px;width:22px;height:22px;border:1px solid #a8a8a8;border-radius:3px;background:linear-gradient(#fefefe,#e9e9e9);box-shadow:inset 0 0 0 1px rgba(255,255,255,.6)"></div>
<div class="a" style="left:413px;top:203px;width:22px;height:22px;border:1px solid #a8a8a8;border-radius:3px;background:linear-gradient(#fefefe,#e9e9e9);box-shadow:inset 0 0 0 1px rgba(255,255,255,.6)"></div>
<div class="a" style="left:242px;top:234px;width:264px;height:24px;border:1px solid #f07070"></div>
<div class="a" style="left:273px;top:235px;width:22px;height:22px;border:1px solid #a8a8a8;border-radius:3px;background:linear-gradient(#fefefe,#e9e9e9);box-shadow:inset 0 0 0 1px rgba(255,255,255,.6)"></div>
<div class="a" style="left:333px;top:235px;width:22px;height:22px;border:1px solid #a8a8a8;border-radius:3px;background:linear-gradient(#fefefe,#e9e9e9);box-shadow:inset 0 0 0 1px rgba(255,255,255,.6)"></div>
<div class="a" style="left:393px;top:235px;width:22px;height:22px;border:1px solid #a8a8a8;border-radius:3px;background:linear-gradient(#fefefe,#e9e9e9);box-shadow:inset 0 0 0 1px rgba(255,255,255,.6)"></div>
<div class="a" style="left:453px;top:235px;width:22px;height:22px;border:1px solid #a8a8a8;border-radius:3px;background:linear-gradient(#fefefe,#e9e9e9);box-shadow:inset 0 0 0 1px rgba(255,255,255,.6)"></div>
<div class="a" style="left:242px;top:266px;width:264px;height:24px;border:1px solid #f07070"></div>
<div class="a" style="left:273px;top:267px;width:22px;height:22px;border:1px solid #a8a8a8;border-radius:3px;background:linear-gradient(#fefefe,#e9e9e9);box-shadow:inset 0 0 0 1px rgba(255,255,255,.6)"></div>
<div class="a" style="left:333px;top:267px;width:22px;height:22px;border:1px solid #a8a8a8;border-radius:3px;background:linear-gradient(#fefefe,#e9e9e9);box-shadow:inset 0 0 0 1px rgba(255,255,255,.6)"></div>
<div class="a" style="left:393px;top:267px;width:22px;height:22px;border:1px solid #a8a8a8;border-radius:3px;background:linear-gradient(#fefefe,#e9e9e9);box-shadow:inset 0 0 0 1px rgba(255,255,255,.6)"></div>
<div class="a" style="left:453px;top:267px;width:22px;height:22px;border:1px solid #a8a8a8;border-radius:3px;background:linear-gradient(#fefefe,#e9e9e9);box-shadow:inset 0 0 0 1px rgba(255,255,255,.6)"></div>
<div class="a" style="left:242px;top:298px;width:264px;height:24px;border:1px solid #f07070"></div>
<div class="a" style="left:273px;top:299px;width:22px;height:22px;border:1px solid #a8a8a8;border-radius:3px;background:linear-gradient(#fefefe,#e9e9e9);box-shadow:inset 0 0 0 1px rgba(255,255,255,.6)"></div>
<div class="a" style="left:333px;top:299px;width:22px;height:22px;border:1px solid #a8a8a8;border-radius:3px;background:linear-gradient(#fefefe,#e9e9e9);box-shadow:inset 0 0 0 1px rgba(255,255,255,.6)"></div>
<div class="a" style="left:393px;top:299px;width:22px;height:22px;border:1px solid #a8a8a8;border-radius:3px;background:linear-gradient(#fefefe,#e9e9e9);box-shadow:inset 0 0 0 1px rgba(255,255,255,.6)"></div>
<div class="a" style="left:453px;top:299px;width:22px;height:22px;border:1px solid #a8a8a8;border-radius:3px;background:linear-gradient(#fefefe,#e9e9e9);box-shadow:inset 0 0 0 1px rgba(255,255,255,.6)"></div>
<div class="a" style="left:242px;top:330px;width:264px;height:24px;border:1px solid #f07070"></div>
<div class="a" style="left:313px;top:331px;width:22px;height:22px;border:1px solid #a8a8a8;border-radius:3px;background:linear-gradient(#fefefe,#e9e9e9);box-shadow:inset 0 0 0 1px rgba(255,255,255,.6)"></div>
<div class="a" style="left:413px;top:331px;width:22px;height:22px;border:1px solid #a8a8a8;border-radius:3px;background:linear-gradient(#fefefe,#e9e9e9);box-shadow:inset 0 0 0 1px rgba(255,255,255,.6)"></div>
<div class="a" style="left:242px;top:362px;width:264px;height:26px;border:1px solid #f07070"></div>
<div class="a" style="left:243px;top:368px;width:12px;height:12px;border:1px solid #b4b4b4;border-radius:2px;background:#fff;box-shadow:inset 0 1px 0 #e4e4e4"></div>
<div class="t" style="left:262.20px;top:369px;font-size:12.5px;line-height:14px;color:#000;letter-spacing:-0.262px;">Use Spacing</div>
<div class="a" style="left:378px;top:364px;width:127px;height:22px;border:1px solid #a8a8a8;border-radius:3px;background:#fff;overflow:hidden;box-shadow:inset 0 1px 0 #ececec"><div class="a" style="left:113px;top:0;width:15px;height:22px;background:linear-gradient(#fefefe,#e9e9e9);border-left:1px solid #a9a9a9"></div></div>
<svg class="a" style="left:495.0px;top:370.0px" width="8" height="4"><path d="M0 4H8L4.0 0Z" fill="#585858"/></svg>
<svg class="a" style="left:495.0px;top:379.0px" width="8" height="4"><path d="M0 0H8L4.0 4Z" fill="#a2a2a2"/></svg>
<div class="t" style="left:383.30px;top:370px;font-size:12.5px;line-height:14px;color:#000;letter-spacing:-0.426px;">0.00</div>
<div class="a" style="left:242px;top:400px;width:12px;height:12px;border:1px solid #b4b4b4;border-radius:2px;background:#fff;box-shadow:inset 0 1px 0 #e4e4e4"></div>
<div class="t" style="left:261.00px;top:401px;font-size:12.5px;line-height:14px;color:#000;letter-spacing:0.069px;">Reverse Distribution</div>
<svg class="a" style="left:365px;top:433px" width="21" height="46" shape-rendering="crispEdges"><path d="M7.5 0.5L13.5 1.5M7.5 3.5L13.5 4.5M7.5 6.5L13.5 7.5M7.5 9.5L13.5 10.5M7.5 12.5L13.5 13.5M7.5 15.5L13.5 16.5M7.5 18.5L13.5 19.5M7.5 21.5L13.5 22.5M7.5 24.5L13.5 25.5M7.5 27.5L13.5 28.5M7.5 30.5L13.5 31.5M7.5 33.5L13.5 34.5M7.5 36.5L13.5 37.5M7.5 39.5L13.5 40.5M7.5 42.5L13.5 43.5M7.5 45.5L13.5 46.5M7.5 48.5L13.5 49.5" stroke="#fff" stroke-width="1" fill="none"/><path d="M13.5 1.5L7.5 3.5M13.5 4.5L7.5 6.5M13.5 7.5L7.5 9.5M13.5 10.5L7.5 12.5M13.5 13.5L7.5 15.5M13.5 16.5L7.5 18.5M13.5 19.5L7.5 21.5M13.5 22.5L7.5 24.5M13.5 25.5L7.5 27.5M13.5 28.5L7.5 30.5M13.5 31.5L7.5 33.5M13.5 34.5L7.5 36.5M13.5 37.5L7.5 39.5M13.5 40.5L7.5 42.5M13.5 43.5L7.5 45.5M13.5 46.5L7.5 48.5M13.5 49.5L7.5 51.5" stroke="#0000ff" stroke-width="1" fill="none"/><rect x="0" y="0" width="21" height="1" fill="#0000ff"/><rect x="0" y="45" width="21" height="1" fill="#0000ff"/></svg>
<div class="a" style="left:596px;top:76px;width:303px;height:495px;background:#efefef"></div>
<div class="a" style="left:596px;top:76px;width:17px;height:495px;background:linear-gradient(to right,#f2f2f2,#efefef)"></div>
<div class="a" style="left:596px;top:76px;width:17px;height:495px;overflow:hidden">
<div class="a" style="left:-6px;top:-23px;width:19px;height:25px;border:1px solid #cdcdcd;border-radius:4px;background:#dedede"></div>
<div class="a" style="left:-6px;top:5px;width:19px;height:25px;border:1px solid #cdcdcd;border-radius:4px;background:#dedede"></div>
<div class="a" style="left:-6px;top:33px;width:19px;height:25px;border:1px solid #cdcdcd;border-radius:4px;background:#dedede"></div>
<div class="a" style="left:-6px;top:61px;width:19px;height:25px;border:1px solid #cdcdcd;border-radius:4px;background:#dedede"></div>
<div class="a" style="left:-6px;top:89px;width:19px;height:25px;border:1px solid #cdcdcd;border-radius:4px;background:#dedede"></div>
</div>
<div class="a" style="left:598px;top:85px;width:8px;height:18px;background:#5e5e5e"></div>
<svg class="a" style="left:596px;top:110px" width="14" height="22"><path d="M0 10.6L1.8 8.6L2.6 9.6L3.6 8.6L2.8 7.4L4 6L5 7L6 6L5 4.8L6 3L10.2 6.8L0 17.4Z" fill="#5e5e5e"/></svg>
<svg class="a" style="left:596px;top:138px" width="14" height="26"><rect x="6.3" y="2.3" width="3.4" height="3.4" fill="#5e5e5e"/><path d="M0 4H7M8 5V13.5" stroke="#5e5e5e" stroke-width="1" fill="none"/><path d="M0 11.5L2 10.5L8.5 17L6.5 19L0 13.5Z" fill="none" stroke="#5e5e5e" stroke-width="1.3"/><path d="M0 14h3" stroke="#5e5e5e" stroke-width="1"/><ellipse cx="8.6" cy="19.3" rx="2.6" ry="2.1" transform="rotate(45 8.6 19.3)" fill="#5e5e5e"/></svg>
<svg class="a" style="left:596px;top:166px" width="14" height="26"><path d="M0 16.4L4.6 11.4" stroke="#5e5e5e" stroke-width="1.5"/><path d="M2.6 8.4L7 12.6" stroke="#5e5e5e" stroke-width="1"/><ellipse cx="6.9" cy="7.4" rx="4.6" ry="2.9" transform="rotate(-45 6.9 7.4)" fill="#5e5e5e"/></svg>
<div class="a" style="left:597px;top:198px;width:4px;height:13px;background:#5e5e5e"></div>
<div class="a" style="left:602px;top:198px;width:1.4px;height:13px;background:#777"></div>
<div class="a" style="left:605px;top:199px;width:1px;height:12px;background:#bdbdbd"></div>
<div class="a" style="left:596px;top:212px;width:7.5px;height:2.4px;background:#6e6e6e"></div>
<div class="a" style="left:613px;top:76px;width:1px;height:495px;background:#bdbdbd"></div>
<div class="a" style="left:614px;top:76px;width:1px;height:495px;background:#f8f8f8"></div>
<div class="a" style="left:618px;top:76px;width:281px;height:77px;background:#fff"></div>
<div class="a" style="left:618px;top:76px;width:1px;height:77px;background:#b9b9b9"></div>
<div class="a" style="left:618px;top:152px;width:281px;height:1px;background:#b9b9b9"></div>
<div class="a" style="left:615px;top:156px;width:284px;height:26px;background:#b8b8b8"></div>
<div class="a" style="left:654px;top:158px;width:173px;height:27px;background:#efefef"></div>
<svg class="a" style="left:624px;top:163px" width="15" height="14"><path d="M7.3 1L13.8 6L7.3 11L.8 6Z" fill="#000"/><path d="M.9 7.4L7.3 12.3L13.7 7.4" fill="none" stroke="#000" stroke-width="1.1"/><path d="M1 6.7L7.3 11.6L13.6 6.7" fill="none" stroke="#ddd" stroke-width=".7"/></svg>
<div class="a" style="left:665px;top:161px;width:1.3px;height:15px;background:#000"></div>
<div class="a" style="left:667px;top:163px;width:4px;height:3px;background:#000"></div>
<div class="a" style="left:667px;top:167px;width:9px;height:3px;background:#000"></div>
<div class="a" style="left:667px;top:171px;width:6px;height:3px;background:#000"></div>
<div class="t" style="left:684.70px;top:163px;font-size:12.5px;line-height:14px;color:#000;letter-spacing:0.219px;">Align and Distribute</div>
<svg class="a" style="left:806px;top:165px" width="10" height="10"><path d="M1.6 1.6L8.4 8.4M8.4 1.6L1.6 8.4" stroke="#000" stroke-width="1.5" stroke-linecap="round"/></svg>
<svg class="a" style="left:865px;top:168px" width="10" height="5"><path d="M0 0H10L5 5Z" fill="#000"/></svg>
<svg class="a" style="left:887px;top:164px" width="9" height="12"><path d="M2 0H7V1.6H6.4L7 5.4L8.2 7V7.8H.8V7L2 5.4L2.6 1.6H2Z" fill="#000"/><path d="M4.5 7.8V12" stroke="#000" stroke-width="1.2"/></svg>
<div class="a" style="left:618px;top:185px;width:281px;height:26px;background:#dcdcdc"></div>
<div class="a" style="left:618px;top:185px;width:281px;height:25px;overflow:hidden">
<div class="a" style="left:8px;top:9px;width:83px;height:26px;border:1px solid #b4b4b4;border-radius:3px;background:#fff"></div>
<div class="a" style="left:99px;top:9px;width:102px;height:26px;border:1px solid #b4b4b4;border-radius:3px;background:linear-gradient(#fefefe,#ececec 26px)"></div>
<div class="a" style="left:209px;top:9px;width:63px;height:26px;border:1px solid #b4b4b4;border-radius:3px;background:linear-gradient(#fefefe,#ececec 26px)"></div>
</div>
<div class="a" style="left:618px;top:210px;width:281px;height:1px;background:#b4b4b4"></div>
<div class="a" style="left:627px;top:210px;width:83px;height:1px;background:#fff"></div>
<div class="a" style="left:718px;top:210px;width:102px;height:1px;background:#f0f0f0"></div>
<div class="a" style="left:828px;top:210px;width:63px;height:1px;background:#f0f0f0"></div>
<div class="t" style="left:626.00px;top:200px;font-size:12.5px;line-height:14px;color:#000;letter-spacing:-0.129px;">None Selected</div>
<div class="t" style="left:722.20px;top:200px;font-size:12.5px;line-height:14px;color:#000;letter-spacing:-0.174px;">First Selected</div>
<div class="t" style="left:832.30px;top:200px;font-size:12.5px;line-height:14px;color:#000;letter-spacing:-0.238px;">Move</div>
<div class="a" style="left:618px;top:211px;width:281px;height:6px;background:#efefef"></div>
<svg class="a" style="left:805.5px;top:204.0px" width="8" height="4"><path d="M0 0H8L4.0 4Z" fill="#6a6a6a"/></svg>
<svg class="a" style="left:876.5px;top:204.0px" width="8" height="4"><path d="M0 0H8L4.0 4Z" fill="#6a6a6a"/></svg>
<div class="a" style="left:656px;top:193px;width:2px;height:1px;background:#444"></div>
<div class="a" style="left:660px;top:193px;width:1px;height:1px;background:#444"></div>
<div class="a" style="left:618px;top:217px;width:281px;height:25px;background:#dcdcdc"></div>
<div class="a" style="left:618px;top:242px;width:281px;height:1px;background:#b4b4b4"></div>
<svg class="a" style="left:625px;top:226px" width="14" height="10"><path d="M1.6 1.8L7 7.2L12.4 1.8" fill="none" stroke="#000" stroke-width="1.8"/></svg>
<div class="t" style="left:648.10px;top:224px;font-size:12.5px;line-height:14px;color:#000;letter-spacing:0.273px;">Distribute</div>
<div class="a" style="left:661px;top:226px;width:22px;height:16px;border:1px solid #b4b4b4;border-bottom:none;border-radius:3px 3px 0 0;background:linear-gradient(#ffffff,#f6f6f6)"></div>
<div class="a" style="left:662px;top:243px;width:22px;height:2px;background:#f4f4f4"></div>
<div class="a" style="left:726px;top:226px;width:22px;height:16px;border:1px solid #b4b4b4;border-bottom:none;border-radius:3px 3px 0 0;background:linear-gradient(#ffffff,#f6f6f6)"></div>
<div class="a" style="left:727px;top:243px;width:22px;height:2px;background:#f4f4f4"></div>
<div class="a" style="left:676px;top:225px;width:1.4px;height:1px;background:#4a4a4a"></div>
<div class="a" style="left:679px;top:225px;width:1.2px;height:1px;background:#4a4a4a"></div>
<div class="a" style="left:669px;top:235px;width:11px;height:5px;background:#fff8fc"></div>
<div class="a" style="left:670px;top:232px;width:8px;height:3px;background:#000"></div>
<div class="a" style="left:670px;top:240px;width:8px;height:3px;background:#000"></div>
<div class="a" style="left:669px;top:235px;width:11px;height:1px;background:#0a960a"></div>
<div class="a" style="left:669px;top:239px;width:11px;height:1px;background:#0a960a"></div>
<svg class="a" style="left:665px;top:235px" width="3" height="5" shape-rendering="crispEdges"><path d="M0 0H3V1H2V4H3V5H0V4H1V1H0Z" fill="#e8281c"/></svg>
<div class="a" style="left:735px;top:231px;width:5px;height:11px;background:#fffafd"></div>
<div class="a" style="left:732px;top:233px;width:3px;height:8px;background:#000"></div>
<div class="a" style="left:740px;top:233px;width:3px;height:8px;background:#000"></div>
<div class="a" style="left:735px;top:231px;width:1px;height:11px;background:#0a960a"></div>
<div class="a" style="left:739px;top:231px;width:1px;height:11px;background:#0a960a"></div>
</body></html>
